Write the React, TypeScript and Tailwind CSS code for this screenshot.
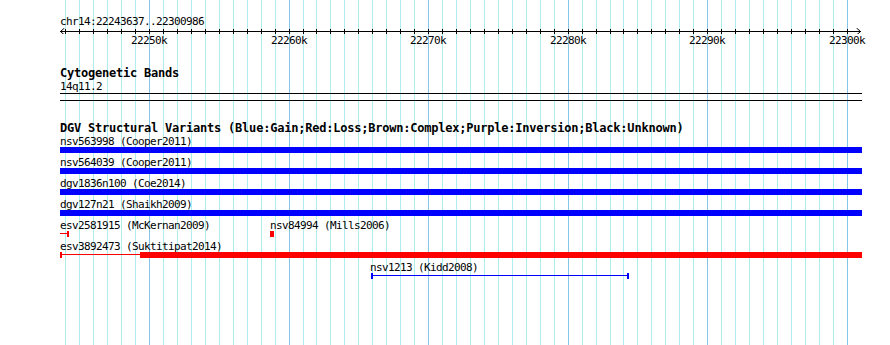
import React from "react";

type Part = { kind: "box" | "line" | "cap"; x0: number; x1: number };
type Feature = { name: string; labelX: number; color: string; parts: Part[] };

// pixel x of the left edge of the track area
const LEFT = 60;
const KB_PX = 13.954;
const GRID_X0 = 65.3;
const FIRST_KB = 22244;

const gridLines = Array.from({ length: 57 }, (_, i) => ({
  x: Math.round(GRID_X0 + i * KB_PX),
  kb: FIRST_KB + i,
}));

const BLUE = "bg-[#0000ff]";
const RED = "bg-[#ff0000]";

const small = "text-[11px] tracking-[-0.62px] leading-[13px]";
const bold = "text-[12px] tracking-[-0.22px] font-bold leading-[13px]";

const rows: Feature[][] = [
  [{ name: "nsv563998 (Cooper2011)", labelX: 60, color: BLUE, parts: [{ kind: "box", x0: 60, x1: 862 }] }],
  [{ name: "nsv564039 (Cooper2011)", labelX: 60, color: BLUE, parts: [{ kind: "box", x0: 60, x1: 862 }] }],
  [{ name: "dgv1836n100 (Coe2014)", labelX: 60, color: BLUE, parts: [{ kind: "box", x0: 60, x1: 862 }] }],
  [{ name: "dgv127n21 (Shaikh2009)", labelX: 60, color: BLUE, parts: [{ kind: "box", x0: 60, x1: 862 }] }],
  [
    {
      name: "esv2581915 (McKernan2009)",
      labelX: 60,
      color: RED,
      parts: [
        { kind: "line", x0: 60, x1: 68 },
        { kind: "cap", x0: 67, x1: 69 },
      ],
    },
    { name: "nsv84994 (Mills2006)", labelX: 270, color: RED, parts: [{ kind: "box", x0: 270, x1: 274 }] },
  ],
  [
    {
      name: "esv3892473 (Suktitipat2014)",
      labelX: 60,
      color: RED,
      parts: [
        { kind: "cap", x0: 60, x1: 62 },
        { kind: "line", x0: 60, x1: 140 },
        { kind: "box", x0: 140, x1: 862 },
      ],
    },
  ],
  [
    {
      name: "nsv1213 (Kidd2008)",
      labelX: 370,
      color: BLUE,
      parts: [
        { kind: "cap", x0: 371, x1: 373 },
        { kind: "line", x0: 371, x1: 629 },
        { kind: "cap", x0: 627, x1: 629 },
      ],
    },
  ],
];

function partClass(kind: Part["kind"]) {
  if (kind === "line") return "absolute top-[2px] h-[1px]";
  return "absolute top-0 h-[6px]";
}

function Grid() {
  return (
    <svg className="absolute inset-0" width={890} height={345} shapeRendering="crispEdges">
      {gridLines.map((g) => (
        <line
          key={g.kb}
          x1={g.x + 0.5}
          x2={g.x + 0.5}
          y1={0}
          y2={345}
          stroke={g.kb % 10 === 0 ? "#86c4e8" : "#aeeeee"}
          strokeWidth={1}
        />
      ))}
    </svg>
  );
}

function Ruler() {
  return (
    <div className="pt-[15px]">
      <div className={`h-[13px] ${small}`}>chr14:22243637..22300986</div>
      <svg width={802} height={6} shapeRendering="crispEdges" className="block">
        <line x1={0} x2={801} y1={3.5} y2={3.5} stroke="#000" />
        {gridLines.map((g) => (
          <line key={g.kb} x1={g.x - LEFT + 0.5} x2={g.x - LEFT + 0.5} y1={1} y2={6} stroke="#000" />
        ))}
        <polyline points="4.5,0 0.5,3.5 4.5,7" fill="none" stroke="#000" shapeRendering="auto" />
        <polyline points="796.5,0 800.5,3.5 796.5,7" fill="none" stroke="#000" shapeRendering="auto" />
      </svg>
      <div className={`relative h-[13px] ${small}`}>
        {gridLines
          .filter((g) => g.kb % 10 === 0)
          .map((g) => (
            <span key={g.kb} className="absolute top-0 w-[36px] text-center" style={{ left: g.x - LEFT - 18 }}>
              {g.kb}k
            </span>
          ))}
      </div>
    </div>
  );
}

function TrackRow({ features }: { features: Feature[] }) {
  return (
    <div className="h-[21px]">
      <div className={`relative h-[12px] ${small}`}>
        {features.map((f) => (
          <span key={f.name} className="absolute top-0 whitespace-nowrap" style={{ left: f.labelX - LEFT }}>
            {f.name}
          </span>
        ))}
      </div>
      <div className="relative h-[6px] w-[802px]">
        {features.flatMap((f) =>
          f.parts.map((p, i) => (
            <div
              key={f.name + i}
              className={`${partClass(p.kind)} ${f.color}`}
              style={{ left: p.x0 - LEFT, width: p.x1 - p.x0 }}
            />
          ))
        )}
      </div>
    </div>
  );
}

export default function App() {
  return (
    <div className="relative h-[345px] w-[890px] overflow-hidden bg-white font-['DejaVu_Sans_Mono',monospace] text-black">
      <Grid />
      <div className="relative w-[862px] pl-[60px]">
        <Ruler />

        <div className={`mt-[20px] h-[13px] ${bold}`}>Cytogenetic Bands</div>
        <div className={`h-[13px] ${small}`}>14q11.2</div>
        <div className="h-[8px] w-[802px] border-y border-black" />

        <div className={`mt-[21px] h-[13px] whitespace-nowrap ${bold}`}>
          DGV Structural Variants (Blue:Gain;Red:Loss;Brown:Complex;Purple:Inversion;Black:Unknown)
        </div>
        {rows.map((r, i) => (
          <TrackRow key={i} features={r} />
        ))}
      </div>
    </div>
  );
}
